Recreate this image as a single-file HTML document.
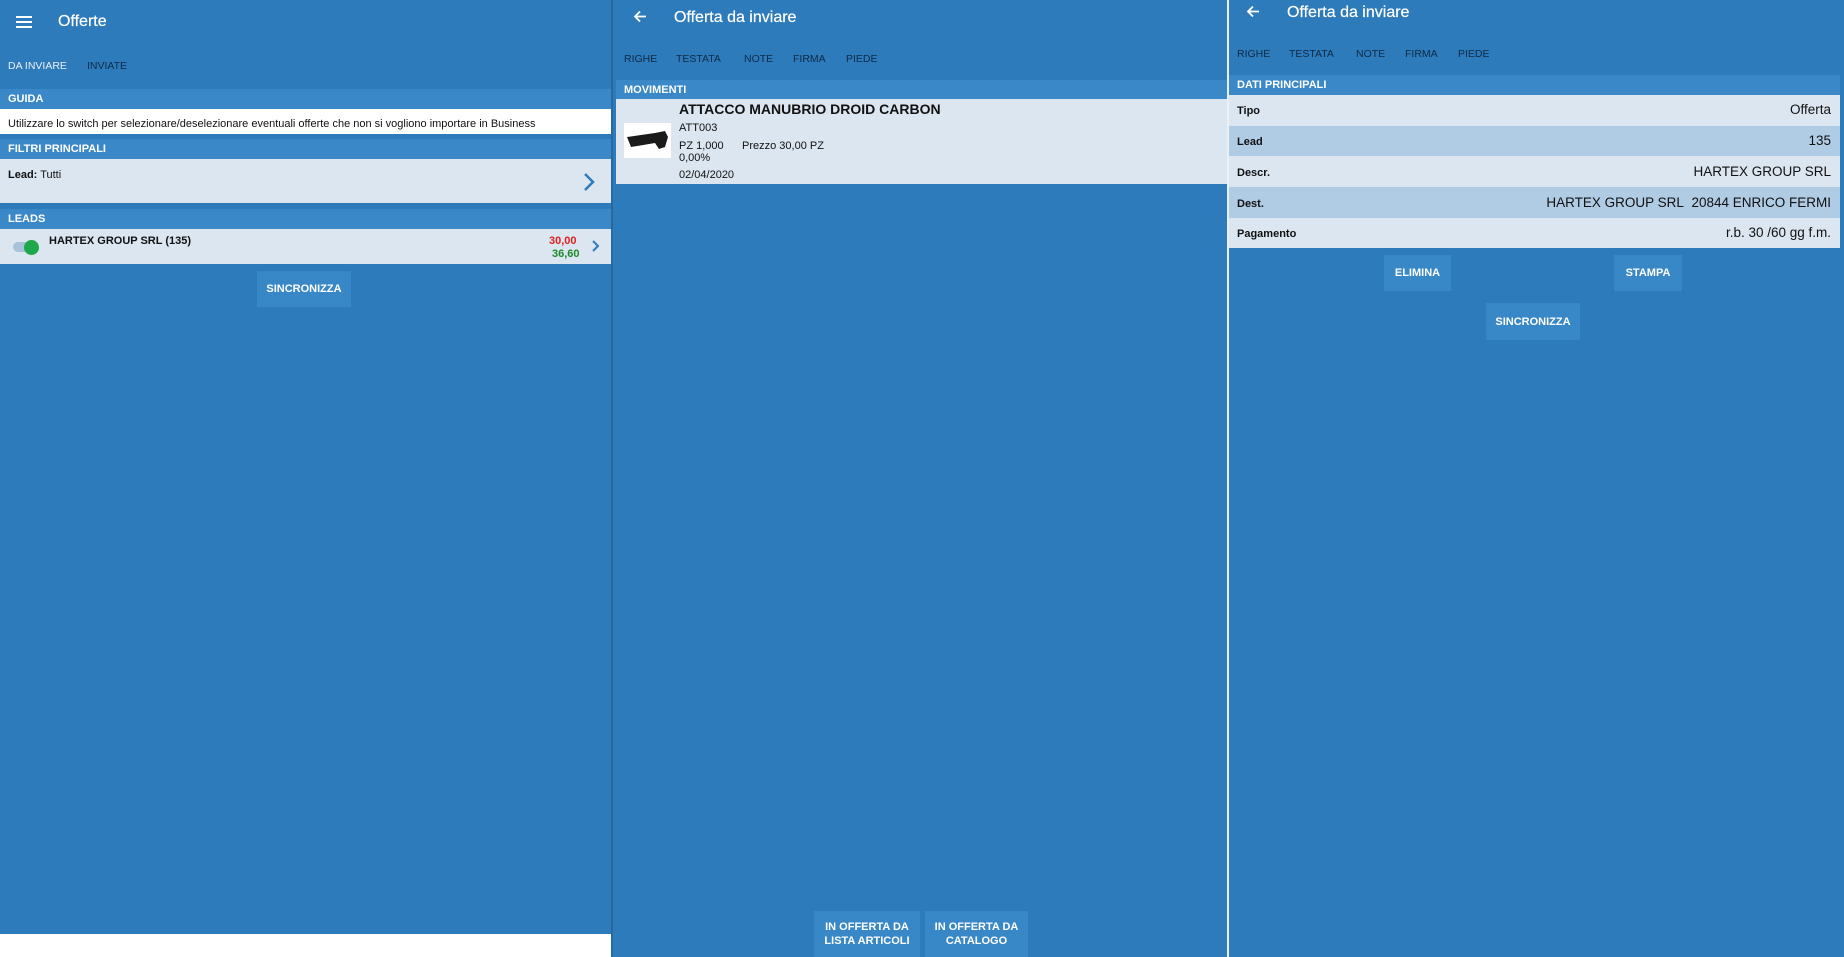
<!DOCTYPE html>
<html><head><meta charset="utf-8"><style>
*{margin:0;padding:0;box-sizing:border-box}
body{width:1844px;height:957px;background:#2e7bbb;font-family:"Liberation Sans",Arial,sans-serif;position:relative;overflow:hidden;color:#111}
.a{position:absolute;white-space:nowrap}
.hdr{position:absolute;background:#3a88c8;color:#fff;font-weight:bold;font-size:11px;padding-left:8px;display:flex;align-items:center}
.row{position:absolute;background:#dce6f0}
.btn{position:absolute;background:#3887c7;color:#fff;font-weight:bold;font-size:11px;display:flex;align-items:center;justify-content:center;text-align:center;line-height:14px}
.title{color:#fff;font-size:16px;-webkit-text-stroke:0.2px #fff}
.tab{font-size:10.5px;color:#0d2a45}
.lbl{font-size:11px;font-weight:bold}
.val{font-size:13.5px;right:13px;text-align:right}
</style></head><body>
<!-- panel 1 -->
<svg class="a" style="left:16px;top:16px" width="16" height="12"><rect y="0" width="16" height="2" fill="#fff"/><rect y="5" width="16" height="2" fill="#fff"/><rect y="10" width="16" height="2" fill="#fff"/></svg>
<div class="a title" style="left:58px;top:13px">Offerte</div>
<div class="a tab" style="left:8px;top:60px;color:#e8f0f8">DA INVIARE</div>
<div class="a tab" style="left:87px;top:60px">INVIATE</div>
<div class="hdr" style="left:0;top:89px;width:611px;height:20px">GUIDA</div>
<div class="row" style="left:0;top:109px;width:611px;height:25px;background:#fff"></div>
<div class="a" style="left:8px;top:118px;font-size:11px">Utilizzare lo switch per selezionare/deselezionare eventuali offerte che non si vogliono importare in Business</div>
<div class="hdr" style="left:0;top:139px;width:611px;height:20px">FILTRI PRINCIPALI</div>
<div class="row" style="left:0;top:159px;width:611px;height:44px"></div>
<div class="a" style="left:8px;top:169px;font-size:11px"><b>Lead:</b> Tutti</div>
<svg class="a" style="left:582px;top:172px" width="14" height="20"><path d="M3 2 L11 10 L3 18" stroke="#2a7bbf" stroke-width="2.5" fill="none"/></svg>
<div class="hdr" style="left:0;top:209px;width:611px;height:20px">LEADS</div>
<div class="row" style="left:0;top:229px;width:611px;height:35px"></div>
<div class="a" style="left:13px;top:242px;width:22px;height:10px;border-radius:5px;background:#a8c2d8"></div>
<div class="a" style="left:24px;top:240px;width:15px;height:15px;border-radius:50%;background:#1fa84a"></div>
<div class="a" style="left:49px;top:235px;font-size:11px;font-weight:bold">HARTEX GROUP SRL (135)</div>
<div class="a" style="left:549px;top:235px;font-size:11px;color:#e02020;font-weight:bold">30,00</div>
<div class="a" style="left:552px;top:248px;font-size:11px;color:#1d8a2a;font-weight:bold">36,60</div>
<svg class="a" style="left:591px;top:239px" width="10" height="14"><path d="M2 2 L7 7 L2 12" stroke="#2a7bbf" stroke-width="2" fill="none"/></svg>
<div class="btn" style="left:257px;top:271px;width:94px;height:36px">SINCRONIZZA</div>
<div class="a" style="left:0;top:934px;width:611px;height:23px;background:#fff"></div>
<!-- divider -->
<div class="a" style="left:611px;top:0;width:2px;height:957px;background:#256aa3"></div>
<!-- panel 2 -->
<svg class="a" style="left:633px;top:10px" width="14" height="13"><path d="M13 6.5 H2 M7 1.5 L2 6.5 L7 11.5" stroke="#fff" stroke-width="1.8" fill="none"/></svg>
<div class="a title" style="left:674px;top:9px">Offerta da inviare</div>
<div class="a tab" style="left:624px;top:53px">RIGHE</div>
<div class="a tab" style="left:676px;top:53px">TESTATA</div>
<div class="a tab" style="left:744px;top:53px">NOTE</div>
<div class="a tab" style="left:793px;top:53px">FIRMA</div>
<div class="a tab" style="left:846px;top:53px">PIEDE</div>
<div class="hdr" style="left:616px;top:80px;width:611px;height:19px">MOVIMENTI</div>
<div class="row" style="left:616px;top:99px;width:611px;height:85px"></div>
<div class="a" style="left:624px;top:123px;width:47px;height:35px;background:#fff"></div>
<svg class="a" style="left:625px;top:127px" width="45" height="28"><path d="M2 10 L30 6 L40 4 L43 10 L40 20 L34 22 L30 16 L6 20 Z" fill="#1a1a1a"/></svg>
<div class="a" style="left:679px;top:101px;font-size:14px;font-weight:bold">ATTACCO MANUBRIO DROID CARBON</div>
<div class="a" style="left:679px;top:122px;font-size:11px">ATT003</div>
<div class="a" style="left:679px;top:140px;font-size:11px">PZ 1,000</div>
<div class="a" style="left:742px;top:140px;font-size:11px">Prezzo 30,00 PZ</div>
<div class="a" style="left:679px;top:152px;font-size:11px">0,00%</div>
<div class="a" style="left:679px;top:169px;font-size:11px">02/04/2020</div>
<div class="btn" style="left:814px;top:911px;width:106px;height:46px">IN OFFERTA DA<br>LISTA ARTICOLI</div>
<div class="btn" style="left:925px;top:911px;width:103px;height:46px">IN OFFERTA DA<br>CATALOGO</div>
<!-- divider -->
<div class="a" style="left:1227px;top:0;width:2px;height:957px;background:#e8f0f8"></div>
<!-- panel 3 -->
<svg class="a" style="left:1246px;top:5px" width="14" height="13"><path d="M13 6.5 H2 M7 1.5 L2 6.5 L7 11.5" stroke="#fff" stroke-width="1.8" fill="none"/></svg>
<div class="a title" style="left:1287px;top:4px">Offerta da inviare</div>
<div class="a tab" style="left:1237px;top:48px">RIGHE</div>
<div class="a tab" style="left:1289px;top:48px">TESTATA</div>
<div class="a tab" style="left:1356px;top:48px">NOTE</div>
<div class="a tab" style="left:1405px;top:48px">FIRMA</div>
<div class="a tab" style="left:1458px;top:48px">PIEDE</div>
<div class="hdr" style="left:1229px;top:75px;width:611px;height:20px">DATI PRINCIPALI</div>
<div class="row" style="left:1229px;top:95px;width:611px;height:31px"></div>
<div class="row" style="left:1229px;top:126px;width:611px;height:30px;background:#b0cce4"></div>
<div class="row" style="left:1229px;top:156px;width:611px;height:31px"></div>
<div class="row" style="left:1229px;top:187px;width:611px;height:31px;background:#b0cce4"></div>
<div class="row" style="left:1229px;top:218px;width:611px;height:30px"></div>
<div class="a lbl" style="left:1237px;top:105px">Tipo</div>
<div class="a lbl" style="left:1237px;top:136px">Lead</div>
<div class="a lbl" style="left:1237px;top:167px">Descr.</div>
<div class="a lbl" style="left:1237px;top:198px">Dest.</div>
<div class="a lbl" style="left:1237px;top:228px">Pagamento</div>
<div class="a val" style="top:102px">Offerta</div>
<div class="a val" style="top:133px">135</div>
<div class="a val" style="top:164px">HARTEX GROUP SRL</div>
<div class="a val" style="top:195px">HARTEX GROUP SRL&nbsp; 20844 ENRICO FERMI</div>
<div class="a val" style="top:225px">r.b. 30 /60 gg f.m.</div>
<div class="btn" style="left:1384px;top:255px;width:67px;height:36px">ELIMINA</div>
<div class="btn" style="left:1614px;top:255px;width:68px;height:36px">STAMPA</div>
<div class="btn" style="left:1486px;top:303px;width:94px;height:37px">SINCRONIZZA</div>
</body></html>
